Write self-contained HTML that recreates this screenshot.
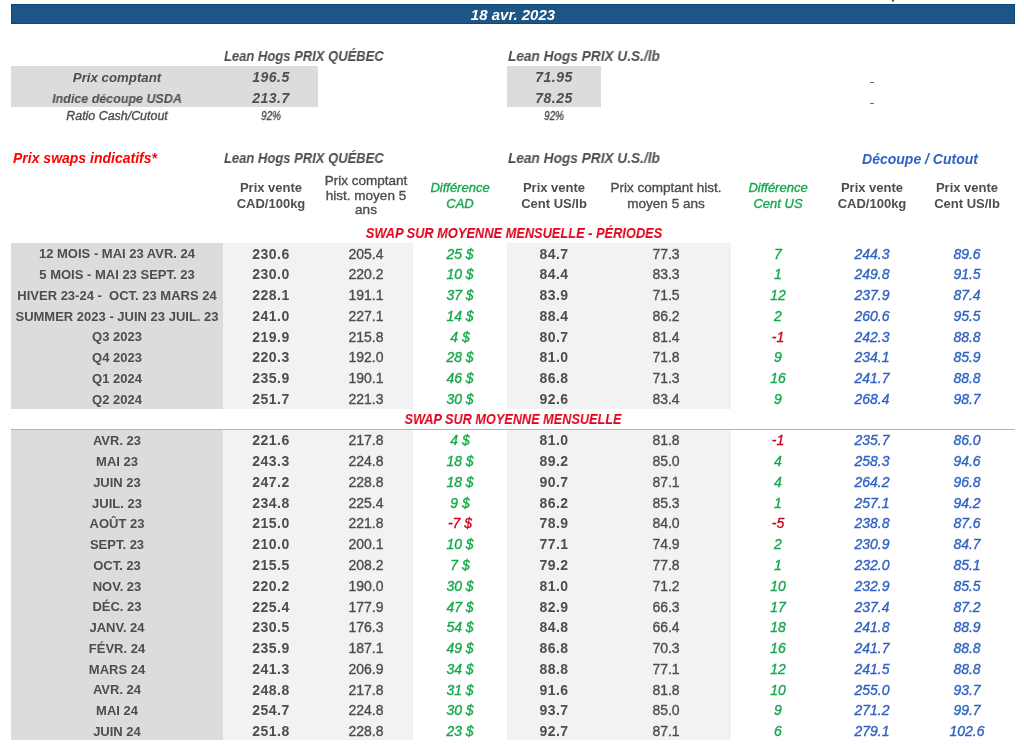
<!DOCTYPE html>
<html><head><meta charset="utf-8"><style>
html,body{margin:0;padding:0;background:#fff;width:1024px;height:744px;overflow:hidden;position:relative;font-family:"Liberation Sans", sans-serif;-webkit-font-smoothing:antialiased;}
body>div{will-change:transform;}
</style></head><body>
<div style="position:absolute;left:11px;top:4px;width:1004px;height:20px;background:#1b5687;box-sizing:border-box;border:1px solid #0d487c"></div>
<div style="position:absolute;left:313.00px;top:6.80px;width:400px;text-align:center;font-size:15px;line-height:15px;font-weight:bold;font-style:italic;color:#fff;white-space:nowrap;">18 avr. 2023</div>
<div style="position:absolute;left:891.8px;top:-1px;width:1.8px;height:3px;background:#4a4a4a;transform:skewX(-18deg);border-radius:0 0 1px 1px"></div>
<div style="position:absolute;left:224.00px;top:49.15px;width:400px;text-align:left;font-size:14px;line-height:14px;font-weight:bold;font-style:italic;color:#4d4d4d;white-space:nowrap;transform:scaleX(0.929);transform-origin:0 0;">Lean Hogs PRIX QUÉBEC</div>
<div style="position:absolute;left:508.00px;top:49.15px;width:400px;text-align:left;font-size:14px;line-height:14px;font-weight:bold;font-style:italic;color:#4d4d4d;white-space:nowrap;transform:scaleX(0.976);transform-origin:0 0;">Lean Hogs PRIX U.S./lb</div>
<div style="position:absolute;left:11px;top:66.00px;width:307px;height:41.00px;background:#dcdcdc"></div>
<div style="position:absolute;left:507px;top:66.00px;width:94px;height:41.00px;background:#dcdcdc"></div>
<div style="position:absolute;left:-83.00px;top:71.00px;width:400px;text-align:center;font-size:13px;line-height:13px;font-weight:bold;font-style:italic;color:#4d4d4d;white-space:nowrap;transform:scaleX(1.02);transform-origin:50% 0;">Prix comptant</div>
<div style="position:absolute;left:-83.00px;top:91.50px;width:400px;text-align:center;font-size:13px;line-height:13px;font-weight:bold;font-style:italic;color:#4d4d4d;white-space:nowrap;transform:scaleX(0.96);transform-origin:50% 0;">Indice découpe USDA</div>
<div style="position:absolute;left:70.50px;top:70.15px;width:400px;text-align:center;font-size:14px;line-height:14px;font-weight:bold;font-style:italic;color:#4d4d4d;white-space:nowrap;letter-spacing:0.5px;">196.5</div>
<div style="position:absolute;left:70.50px;top:90.65px;width:400px;text-align:center;font-size:14px;line-height:14px;font-weight:bold;font-style:italic;color:#4d4d4d;white-space:nowrap;letter-spacing:0.5px;">213.7</div>
<div style="position:absolute;left:354.00px;top:70.15px;width:400px;text-align:center;font-size:14px;line-height:14px;font-weight:bold;font-style:italic;color:#4d4d4d;white-space:nowrap;letter-spacing:0.5px;">71.95</div>
<div style="position:absolute;left:354.00px;top:90.65px;width:400px;text-align:center;font-size:14px;line-height:14px;font-weight:bold;font-style:italic;color:#4d4d4d;white-space:nowrap;letter-spacing:0.5px;">78.25</div>
<div style="position:absolute;left:-83.00px;top:110.34px;width:400px;text-align:center;font-size:12px;line-height:12px;font-weight:normal;font-style:italic;color:#4d4d4d;white-space:nowrap;-webkit-text-stroke:0.35px #4d4d4d;transform:scaleX(1.035);transform-origin:50% 0;">Ratio Cash/Cutout</div>
<div style="position:absolute;left:70.50px;top:109.84px;width:400px;text-align:center;font-size:12px;line-height:12px;font-weight:normal;font-style:italic;color:#4d4d4d;white-space:nowrap;-webkit-text-stroke:0.35px #4d4d4d;transform:scaleX(0.83);transform-origin:50% 0;">92%</div>
<div style="position:absolute;left:354.00px;top:109.84px;width:400px;text-align:center;font-size:12px;line-height:12px;font-weight:normal;font-style:italic;color:#4d4d4d;white-space:nowrap;-webkit-text-stroke:0.35px #4d4d4d;transform:scaleX(0.83);transform-origin:50% 0;">92%</div>
<div style="position:absolute;left:672.00px;top:75.69px;width:400px;text-align:center;font-size:11px;line-height:11px;font-weight:normal;font-style:normal;color:#4d4d4d;white-space:nowrap;-webkit-text-stroke:0.35px #4d4d4d;">-</div>
<div style="position:absolute;left:672.00px;top:96.69px;width:400px;text-align:center;font-size:11px;line-height:11px;font-weight:normal;font-style:normal;color:#4d4d4d;white-space:nowrap;-webkit-text-stroke:0.35px #4d4d4d;">-</div>
<div style="position:absolute;left:12.50px;top:151.15px;width:400px;text-align:left;font-size:14px;line-height:14px;font-weight:bold;font-style:italic;color:#ff0000;white-space:nowrap;">Prix swaps indicatifs*</div>
<div style="position:absolute;left:224.00px;top:151.15px;width:400px;text-align:left;font-size:14px;line-height:14px;font-weight:bold;font-style:italic;color:#4d4d4d;white-space:nowrap;transform:scaleX(0.929);transform-origin:0 0;">Lean Hogs PRIX QUÉBEC</div>
<div style="position:absolute;left:508.00px;top:151.15px;width:400px;text-align:left;font-size:14px;line-height:14px;font-weight:bold;font-style:italic;color:#4d4d4d;white-space:nowrap;transform:scaleX(0.976);transform-origin:0 0;">Lean Hogs PRIX U.S./lb</div>
<div style="position:absolute;left:719.50px;top:151.65px;width:400px;text-align:center;font-size:14px;line-height:14px;font-weight:bold;font-style:italic;color:#2f62c4;white-space:nowrap;">Découpe / Cutout</div>
<div style="position:absolute;left:70.50px;top:181.30px;width:400px;text-align:center;font-size:13px;line-height:13px;font-weight:bold;font-style:normal;color:#4d4d4d;white-space:nowrap;">Prix vente</div>
<div style="position:absolute;left:70.50px;top:196.60px;width:400px;text-align:center;font-size:13px;line-height:13px;font-weight:bold;font-style:normal;color:#4d4d4d;white-space:nowrap;">CAD/100kg</div>
<div style="position:absolute;left:165.50px;top:174.00px;width:400px;text-align:center;font-size:13px;line-height:13px;font-weight:normal;font-style:normal;color:#4d4d4d;white-space:nowrap;-webkit-text-stroke:0.35px #4d4d4d;transform:scaleX(1.04);transform-origin:50% 0;">Prix comptant</div>
<div style="position:absolute;left:165.50px;top:188.80px;width:400px;text-align:center;font-size:13px;line-height:13px;font-weight:normal;font-style:normal;color:#4d4d4d;white-space:nowrap;-webkit-text-stroke:0.35px #4d4d4d;transform:scaleX(1.04);transform-origin:50% 0;">hist. moyen 5</div>
<div style="position:absolute;left:165.50px;top:203.00px;width:400px;text-align:center;font-size:13px;line-height:13px;font-weight:normal;font-style:normal;color:#4d4d4d;white-space:nowrap;-webkit-text-stroke:0.35px #4d4d4d;transform:scaleX(1.04);transform-origin:50% 0;">ans</div>
<div style="position:absolute;left:260.00px;top:181.30px;width:400px;text-align:center;font-size:13px;line-height:13px;font-weight:normal;font-style:italic;color:#16a84b;white-space:nowrap;-webkit-text-stroke:0.35px #16a84b;">Différence</div>
<div style="position:absolute;left:260.00px;top:196.60px;width:400px;text-align:center;font-size:13px;line-height:13px;font-weight:normal;font-style:italic;color:#16a84b;white-space:nowrap;-webkit-text-stroke:0.35px #16a84b;">CAD</div>
<div style="position:absolute;left:354.00px;top:181.30px;width:400px;text-align:center;font-size:13px;line-height:13px;font-weight:bold;font-style:normal;color:#4d4d4d;white-space:nowrap;">Prix vente</div>
<div style="position:absolute;left:354.00px;top:196.60px;width:400px;text-align:center;font-size:13px;line-height:13px;font-weight:bold;font-style:normal;color:#4d4d4d;white-space:nowrap;">Cent US/lb</div>
<div style="position:absolute;left:466.00px;top:181.30px;width:400px;text-align:center;font-size:13px;line-height:13px;font-weight:normal;font-style:normal;color:#4d4d4d;white-space:nowrap;-webkit-text-stroke:0.35px #4d4d4d;transform:scaleX(1.04);transform-origin:50% 0;">Prix comptant hist.</div>
<div style="position:absolute;left:466.00px;top:196.60px;width:400px;text-align:center;font-size:13px;line-height:13px;font-weight:normal;font-style:normal;color:#4d4d4d;white-space:nowrap;-webkit-text-stroke:0.35px #4d4d4d;transform:scaleX(1.04);transform-origin:50% 0;">moyen 5 ans</div>
<div style="position:absolute;left:578.00px;top:181.30px;width:400px;text-align:center;font-size:13px;line-height:13px;font-weight:normal;font-style:italic;color:#16a84b;white-space:nowrap;-webkit-text-stroke:0.35px #16a84b;">Différence</div>
<div style="position:absolute;left:578.00px;top:196.60px;width:400px;text-align:center;font-size:13px;line-height:13px;font-weight:normal;font-style:italic;color:#16a84b;white-space:nowrap;-webkit-text-stroke:0.35px #16a84b;">Cent US</div>
<div style="position:absolute;left:672.00px;top:181.30px;width:400px;text-align:center;font-size:13px;line-height:13px;font-weight:bold;font-style:normal;color:#4d4d4d;white-space:nowrap;">Prix vente</div>
<div style="position:absolute;left:672.00px;top:196.60px;width:400px;text-align:center;font-size:13px;line-height:13px;font-weight:bold;font-style:normal;color:#4d4d4d;white-space:nowrap;">CAD/100kg</div>
<div style="position:absolute;left:767.00px;top:181.30px;width:400px;text-align:center;font-size:13px;line-height:13px;font-weight:bold;font-style:normal;color:#4d4d4d;white-space:nowrap;">Prix vente</div>
<div style="position:absolute;left:767.00px;top:196.60px;width:400px;text-align:center;font-size:13px;line-height:13px;font-weight:bold;font-style:normal;color:#4d4d4d;white-space:nowrap;">Cent US/lb</div>
<div style="position:absolute;left:313.80px;top:224.80px;width:400px;text-align:center;font-size:15px;line-height:15px;font-weight:bold;font-style:italic;color:#e2001a;white-space:nowrap;transform:scaleX(0.854);transform-origin:50% 0;">SWAP SUR MOYENNE MENSUELLE - PÉRIODES</div>
<div style="position:absolute;left:11px;top:242.60px;width:212px;height:166.08px;background:#dcdcdc"></div>
<div style="position:absolute;left:223px;top:242.60px;width:190px;height:166.08px;background:#f2f2f2"></div>
<div style="position:absolute;left:507px;top:242.60px;width:224px;height:166.08px;background:#f2f2f2"></div>
<div style="position:absolute;left:11px;top:429.44px;width:212px;height:311.40px;background:#dcdcdc"></div>
<div style="position:absolute;left:223px;top:429.44px;width:190px;height:311.40px;background:#f2f2f2"></div>
<div style="position:absolute;left:507px;top:429.44px;width:224px;height:311.40px;background:#f2f2f2"></div>
<div style="position:absolute;left:11px;top:429.00px;width:1004px;height:1.00px;background:#b7b3b1"></div>
<div style="position:absolute;left:313.00px;top:411.48px;width:400px;text-align:center;font-size:15px;line-height:15px;font-weight:bold;font-style:italic;color:#e2001a;white-space:nowrap;transform:scaleX(0.847);transform-origin:50% 0;">SWAP SUR MOYENNE MENSUELLE</div>
<div style="position:absolute;left:-83.00px;top:247.45px;width:400px;text-align:center;font-size:13px;line-height:13px;font-weight:bold;font-style:normal;color:#4d4d4d;white-space:nowrap;">12 MOIS - MAI 23 AVR. 24</div>
<div style="position:absolute;left:70.50px;top:246.60px;width:400px;text-align:center;font-size:14px;line-height:14px;font-weight:bold;font-style:normal;color:#4d4d4d;white-space:nowrap;letter-spacing:0.5px;">230.6</div>
<div style="position:absolute;left:165.50px;top:246.60px;width:400px;text-align:center;font-size:14px;line-height:14px;font-weight:normal;font-style:normal;color:#4d4d4d;white-space:nowrap;-webkit-text-stroke:0.35px #4d4d4d;">205.4</div>
<div style="position:absolute;left:260.00px;top:246.60px;width:400px;text-align:center;font-size:14px;line-height:14px;font-weight:normal;font-style:italic;color:#16a84b;white-space:nowrap;-webkit-text-stroke:0.35px #16a84b;">25 $</div>
<div style="position:absolute;left:354.00px;top:246.60px;width:400px;text-align:center;font-size:14px;line-height:14px;font-weight:bold;font-style:normal;color:#4d4d4d;white-space:nowrap;letter-spacing:0.5px;">84.7</div>
<div style="position:absolute;left:466.00px;top:246.60px;width:400px;text-align:center;font-size:14px;line-height:14px;font-weight:normal;font-style:normal;color:#4d4d4d;white-space:nowrap;-webkit-text-stroke:0.35px #4d4d4d;">77.3</div>
<div style="position:absolute;left:578.00px;top:246.60px;width:400px;text-align:center;font-size:14px;line-height:14px;font-weight:normal;font-style:italic;color:#16a84b;white-space:nowrap;-webkit-text-stroke:0.35px #16a84b;">7</div>
<div style="position:absolute;left:672.00px;top:246.60px;width:400px;text-align:center;font-size:14px;line-height:14px;font-weight:normal;font-style:italic;color:#2f62c4;white-space:nowrap;-webkit-text-stroke:0.35px #2f62c4;">244.3</div>
<div style="position:absolute;left:767.00px;top:246.60px;width:400px;text-align:center;font-size:14px;line-height:14px;font-weight:normal;font-style:italic;color:#2f62c4;white-space:nowrap;-webkit-text-stroke:0.35px #2f62c4;">89.6</div>
<div style="position:absolute;left:-83.00px;top:268.21px;width:400px;text-align:center;font-size:13px;line-height:13px;font-weight:bold;font-style:normal;color:#4d4d4d;white-space:nowrap;">5 MOIS - MAI 23 SEPT. 23</div>
<div style="position:absolute;left:70.50px;top:267.36px;width:400px;text-align:center;font-size:14px;line-height:14px;font-weight:bold;font-style:normal;color:#4d4d4d;white-space:nowrap;letter-spacing:0.5px;">230.0</div>
<div style="position:absolute;left:165.50px;top:267.36px;width:400px;text-align:center;font-size:14px;line-height:14px;font-weight:normal;font-style:normal;color:#4d4d4d;white-space:nowrap;-webkit-text-stroke:0.35px #4d4d4d;">220.2</div>
<div style="position:absolute;left:260.00px;top:267.36px;width:400px;text-align:center;font-size:14px;line-height:14px;font-weight:normal;font-style:italic;color:#16a84b;white-space:nowrap;-webkit-text-stroke:0.35px #16a84b;">10 $</div>
<div style="position:absolute;left:354.00px;top:267.36px;width:400px;text-align:center;font-size:14px;line-height:14px;font-weight:bold;font-style:normal;color:#4d4d4d;white-space:nowrap;letter-spacing:0.5px;">84.4</div>
<div style="position:absolute;left:466.00px;top:267.36px;width:400px;text-align:center;font-size:14px;line-height:14px;font-weight:normal;font-style:normal;color:#4d4d4d;white-space:nowrap;-webkit-text-stroke:0.35px #4d4d4d;">83.3</div>
<div style="position:absolute;left:578.00px;top:267.36px;width:400px;text-align:center;font-size:14px;line-height:14px;font-weight:normal;font-style:italic;color:#16a84b;white-space:nowrap;-webkit-text-stroke:0.35px #16a84b;">1</div>
<div style="position:absolute;left:672.00px;top:267.36px;width:400px;text-align:center;font-size:14px;line-height:14px;font-weight:normal;font-style:italic;color:#2f62c4;white-space:nowrap;-webkit-text-stroke:0.35px #2f62c4;">249.8</div>
<div style="position:absolute;left:767.00px;top:267.36px;width:400px;text-align:center;font-size:14px;line-height:14px;font-weight:normal;font-style:italic;color:#2f62c4;white-space:nowrap;-webkit-text-stroke:0.35px #2f62c4;">91.5</div>
<div style="position:absolute;left:-83.00px;top:288.97px;width:400px;text-align:center;font-size:13px;line-height:13px;font-weight:bold;font-style:normal;color:#4d4d4d;white-space:nowrap;">HIVER 23-24 -&nbsp; OCT. 23 MARS 24</div>
<div style="position:absolute;left:70.50px;top:288.12px;width:400px;text-align:center;font-size:14px;line-height:14px;font-weight:bold;font-style:normal;color:#4d4d4d;white-space:nowrap;letter-spacing:0.5px;">228.1</div>
<div style="position:absolute;left:165.50px;top:288.12px;width:400px;text-align:center;font-size:14px;line-height:14px;font-weight:normal;font-style:normal;color:#4d4d4d;white-space:nowrap;-webkit-text-stroke:0.35px #4d4d4d;">191.1</div>
<div style="position:absolute;left:260.00px;top:288.12px;width:400px;text-align:center;font-size:14px;line-height:14px;font-weight:normal;font-style:italic;color:#16a84b;white-space:nowrap;-webkit-text-stroke:0.35px #16a84b;">37 $</div>
<div style="position:absolute;left:354.00px;top:288.12px;width:400px;text-align:center;font-size:14px;line-height:14px;font-weight:bold;font-style:normal;color:#4d4d4d;white-space:nowrap;letter-spacing:0.5px;">83.9</div>
<div style="position:absolute;left:466.00px;top:288.12px;width:400px;text-align:center;font-size:14px;line-height:14px;font-weight:normal;font-style:normal;color:#4d4d4d;white-space:nowrap;-webkit-text-stroke:0.35px #4d4d4d;">71.5</div>
<div style="position:absolute;left:578.00px;top:288.12px;width:400px;text-align:center;font-size:14px;line-height:14px;font-weight:normal;font-style:italic;color:#16a84b;white-space:nowrap;-webkit-text-stroke:0.35px #16a84b;">12</div>
<div style="position:absolute;left:672.00px;top:288.12px;width:400px;text-align:center;font-size:14px;line-height:14px;font-weight:normal;font-style:italic;color:#2f62c4;white-space:nowrap;-webkit-text-stroke:0.35px #2f62c4;">237.9</div>
<div style="position:absolute;left:767.00px;top:288.12px;width:400px;text-align:center;font-size:14px;line-height:14px;font-weight:normal;font-style:italic;color:#2f62c4;white-space:nowrap;-webkit-text-stroke:0.35px #2f62c4;">87.4</div>
<div style="position:absolute;left:-83.00px;top:309.73px;width:400px;text-align:center;font-size:13px;line-height:13px;font-weight:bold;font-style:normal;color:#4d4d4d;white-space:nowrap;">SUMMER 2023 - JUIN 23 JUIL. 23</div>
<div style="position:absolute;left:70.50px;top:308.88px;width:400px;text-align:center;font-size:14px;line-height:14px;font-weight:bold;font-style:normal;color:#4d4d4d;white-space:nowrap;letter-spacing:0.5px;">241.0</div>
<div style="position:absolute;left:165.50px;top:308.88px;width:400px;text-align:center;font-size:14px;line-height:14px;font-weight:normal;font-style:normal;color:#4d4d4d;white-space:nowrap;-webkit-text-stroke:0.35px #4d4d4d;">227.1</div>
<div style="position:absolute;left:260.00px;top:308.88px;width:400px;text-align:center;font-size:14px;line-height:14px;font-weight:normal;font-style:italic;color:#16a84b;white-space:nowrap;-webkit-text-stroke:0.35px #16a84b;">14 $</div>
<div style="position:absolute;left:354.00px;top:308.88px;width:400px;text-align:center;font-size:14px;line-height:14px;font-weight:bold;font-style:normal;color:#4d4d4d;white-space:nowrap;letter-spacing:0.5px;">88.4</div>
<div style="position:absolute;left:466.00px;top:308.88px;width:400px;text-align:center;font-size:14px;line-height:14px;font-weight:normal;font-style:normal;color:#4d4d4d;white-space:nowrap;-webkit-text-stroke:0.35px #4d4d4d;">86.2</div>
<div style="position:absolute;left:578.00px;top:308.88px;width:400px;text-align:center;font-size:14px;line-height:14px;font-weight:normal;font-style:italic;color:#16a84b;white-space:nowrap;-webkit-text-stroke:0.35px #16a84b;">2</div>
<div style="position:absolute;left:672.00px;top:308.88px;width:400px;text-align:center;font-size:14px;line-height:14px;font-weight:normal;font-style:italic;color:#2f62c4;white-space:nowrap;-webkit-text-stroke:0.35px #2f62c4;">260.6</div>
<div style="position:absolute;left:767.00px;top:308.88px;width:400px;text-align:center;font-size:14px;line-height:14px;font-weight:normal;font-style:italic;color:#2f62c4;white-space:nowrap;-webkit-text-stroke:0.35px #2f62c4;">95.5</div>
<div style="position:absolute;left:-83.00px;top:330.49px;width:400px;text-align:center;font-size:13px;line-height:13px;font-weight:bold;font-style:normal;color:#4d4d4d;white-space:nowrap;">Q3 2023</div>
<div style="position:absolute;left:70.50px;top:329.64px;width:400px;text-align:center;font-size:14px;line-height:14px;font-weight:bold;font-style:normal;color:#4d4d4d;white-space:nowrap;letter-spacing:0.5px;">219.9</div>
<div style="position:absolute;left:165.50px;top:329.64px;width:400px;text-align:center;font-size:14px;line-height:14px;font-weight:normal;font-style:normal;color:#4d4d4d;white-space:nowrap;-webkit-text-stroke:0.35px #4d4d4d;">215.8</div>
<div style="position:absolute;left:260.00px;top:329.64px;width:400px;text-align:center;font-size:14px;line-height:14px;font-weight:normal;font-style:italic;color:#16a84b;white-space:nowrap;-webkit-text-stroke:0.35px #16a84b;">4 $</div>
<div style="position:absolute;left:354.00px;top:329.64px;width:400px;text-align:center;font-size:14px;line-height:14px;font-weight:bold;font-style:normal;color:#4d4d4d;white-space:nowrap;letter-spacing:0.5px;">80.7</div>
<div style="position:absolute;left:466.00px;top:329.64px;width:400px;text-align:center;font-size:14px;line-height:14px;font-weight:normal;font-style:normal;color:#4d4d4d;white-space:nowrap;-webkit-text-stroke:0.35px #4d4d4d;">81.4</div>
<div style="position:absolute;left:578.00px;top:329.64px;width:400px;text-align:center;font-size:14px;line-height:14px;font-weight:normal;font-style:italic;color:#d0021b;white-space:nowrap;-webkit-text-stroke:0.35px #d0021b;">-1</div>
<div style="position:absolute;left:672.00px;top:329.64px;width:400px;text-align:center;font-size:14px;line-height:14px;font-weight:normal;font-style:italic;color:#2f62c4;white-space:nowrap;-webkit-text-stroke:0.35px #2f62c4;">242.3</div>
<div style="position:absolute;left:767.00px;top:329.64px;width:400px;text-align:center;font-size:14px;line-height:14px;font-weight:normal;font-style:italic;color:#2f62c4;white-space:nowrap;-webkit-text-stroke:0.35px #2f62c4;">88.8</div>
<div style="position:absolute;left:-83.00px;top:351.25px;width:400px;text-align:center;font-size:13px;line-height:13px;font-weight:bold;font-style:normal;color:#4d4d4d;white-space:nowrap;">Q4 2023</div>
<div style="position:absolute;left:70.50px;top:350.40px;width:400px;text-align:center;font-size:14px;line-height:14px;font-weight:bold;font-style:normal;color:#4d4d4d;white-space:nowrap;letter-spacing:0.5px;">220.3</div>
<div style="position:absolute;left:165.50px;top:350.40px;width:400px;text-align:center;font-size:14px;line-height:14px;font-weight:normal;font-style:normal;color:#4d4d4d;white-space:nowrap;-webkit-text-stroke:0.35px #4d4d4d;">192.0</div>
<div style="position:absolute;left:260.00px;top:350.40px;width:400px;text-align:center;font-size:14px;line-height:14px;font-weight:normal;font-style:italic;color:#16a84b;white-space:nowrap;-webkit-text-stroke:0.35px #16a84b;">28 $</div>
<div style="position:absolute;left:354.00px;top:350.40px;width:400px;text-align:center;font-size:14px;line-height:14px;font-weight:bold;font-style:normal;color:#4d4d4d;white-space:nowrap;letter-spacing:0.5px;">81.0</div>
<div style="position:absolute;left:466.00px;top:350.40px;width:400px;text-align:center;font-size:14px;line-height:14px;font-weight:normal;font-style:normal;color:#4d4d4d;white-space:nowrap;-webkit-text-stroke:0.35px #4d4d4d;">71.8</div>
<div style="position:absolute;left:578.00px;top:350.40px;width:400px;text-align:center;font-size:14px;line-height:14px;font-weight:normal;font-style:italic;color:#16a84b;white-space:nowrap;-webkit-text-stroke:0.35px #16a84b;">9</div>
<div style="position:absolute;left:672.00px;top:350.40px;width:400px;text-align:center;font-size:14px;line-height:14px;font-weight:normal;font-style:italic;color:#2f62c4;white-space:nowrap;-webkit-text-stroke:0.35px #2f62c4;">234.1</div>
<div style="position:absolute;left:767.00px;top:350.40px;width:400px;text-align:center;font-size:14px;line-height:14px;font-weight:normal;font-style:italic;color:#2f62c4;white-space:nowrap;-webkit-text-stroke:0.35px #2f62c4;">85.9</div>
<div style="position:absolute;left:-83.00px;top:372.01px;width:400px;text-align:center;font-size:13px;line-height:13px;font-weight:bold;font-style:normal;color:#4d4d4d;white-space:nowrap;">Q1 2024</div>
<div style="position:absolute;left:70.50px;top:371.16px;width:400px;text-align:center;font-size:14px;line-height:14px;font-weight:bold;font-style:normal;color:#4d4d4d;white-space:nowrap;letter-spacing:0.5px;">235.9</div>
<div style="position:absolute;left:165.50px;top:371.16px;width:400px;text-align:center;font-size:14px;line-height:14px;font-weight:normal;font-style:normal;color:#4d4d4d;white-space:nowrap;-webkit-text-stroke:0.35px #4d4d4d;">190.1</div>
<div style="position:absolute;left:260.00px;top:371.16px;width:400px;text-align:center;font-size:14px;line-height:14px;font-weight:normal;font-style:italic;color:#16a84b;white-space:nowrap;-webkit-text-stroke:0.35px #16a84b;">46 $</div>
<div style="position:absolute;left:354.00px;top:371.16px;width:400px;text-align:center;font-size:14px;line-height:14px;font-weight:bold;font-style:normal;color:#4d4d4d;white-space:nowrap;letter-spacing:0.5px;">86.8</div>
<div style="position:absolute;left:466.00px;top:371.16px;width:400px;text-align:center;font-size:14px;line-height:14px;font-weight:normal;font-style:normal;color:#4d4d4d;white-space:nowrap;-webkit-text-stroke:0.35px #4d4d4d;">71.3</div>
<div style="position:absolute;left:578.00px;top:371.16px;width:400px;text-align:center;font-size:14px;line-height:14px;font-weight:normal;font-style:italic;color:#16a84b;white-space:nowrap;-webkit-text-stroke:0.35px #16a84b;">16</div>
<div style="position:absolute;left:672.00px;top:371.16px;width:400px;text-align:center;font-size:14px;line-height:14px;font-weight:normal;font-style:italic;color:#2f62c4;white-space:nowrap;-webkit-text-stroke:0.35px #2f62c4;">241.7</div>
<div style="position:absolute;left:767.00px;top:371.16px;width:400px;text-align:center;font-size:14px;line-height:14px;font-weight:normal;font-style:italic;color:#2f62c4;white-space:nowrap;-webkit-text-stroke:0.35px #2f62c4;">88.8</div>
<div style="position:absolute;left:-83.00px;top:392.77px;width:400px;text-align:center;font-size:13px;line-height:13px;font-weight:bold;font-style:normal;color:#4d4d4d;white-space:nowrap;">Q2 2024</div>
<div style="position:absolute;left:70.50px;top:391.92px;width:400px;text-align:center;font-size:14px;line-height:14px;font-weight:bold;font-style:normal;color:#4d4d4d;white-space:nowrap;letter-spacing:0.5px;">251.7</div>
<div style="position:absolute;left:165.50px;top:391.92px;width:400px;text-align:center;font-size:14px;line-height:14px;font-weight:normal;font-style:normal;color:#4d4d4d;white-space:nowrap;-webkit-text-stroke:0.35px #4d4d4d;">221.3</div>
<div style="position:absolute;left:260.00px;top:391.92px;width:400px;text-align:center;font-size:14px;line-height:14px;font-weight:normal;font-style:italic;color:#16a84b;white-space:nowrap;-webkit-text-stroke:0.35px #16a84b;">30 $</div>
<div style="position:absolute;left:354.00px;top:391.92px;width:400px;text-align:center;font-size:14px;line-height:14px;font-weight:bold;font-style:normal;color:#4d4d4d;white-space:nowrap;letter-spacing:0.5px;">92.6</div>
<div style="position:absolute;left:466.00px;top:391.92px;width:400px;text-align:center;font-size:14px;line-height:14px;font-weight:normal;font-style:normal;color:#4d4d4d;white-space:nowrap;-webkit-text-stroke:0.35px #4d4d4d;">83.4</div>
<div style="position:absolute;left:578.00px;top:391.92px;width:400px;text-align:center;font-size:14px;line-height:14px;font-weight:normal;font-style:italic;color:#16a84b;white-space:nowrap;-webkit-text-stroke:0.35px #16a84b;">9</div>
<div style="position:absolute;left:672.00px;top:391.92px;width:400px;text-align:center;font-size:14px;line-height:14px;font-weight:normal;font-style:italic;color:#2f62c4;white-space:nowrap;-webkit-text-stroke:0.35px #2f62c4;">268.4</div>
<div style="position:absolute;left:767.00px;top:391.92px;width:400px;text-align:center;font-size:14px;line-height:14px;font-weight:normal;font-style:italic;color:#2f62c4;white-space:nowrap;-webkit-text-stroke:0.35px #2f62c4;">98.7</div>
<div style="position:absolute;left:-83.00px;top:434.29px;width:400px;text-align:center;font-size:13px;line-height:13px;font-weight:bold;font-style:normal;color:#4d4d4d;white-space:nowrap;">AVR. 23</div>
<div style="position:absolute;left:70.50px;top:433.44px;width:400px;text-align:center;font-size:14px;line-height:14px;font-weight:bold;font-style:normal;color:#4d4d4d;white-space:nowrap;letter-spacing:0.5px;">221.6</div>
<div style="position:absolute;left:165.50px;top:433.44px;width:400px;text-align:center;font-size:14px;line-height:14px;font-weight:normal;font-style:normal;color:#4d4d4d;white-space:nowrap;-webkit-text-stroke:0.35px #4d4d4d;">217.8</div>
<div style="position:absolute;left:260.00px;top:433.44px;width:400px;text-align:center;font-size:14px;line-height:14px;font-weight:normal;font-style:italic;color:#16a84b;white-space:nowrap;-webkit-text-stroke:0.35px #16a84b;">4 $</div>
<div style="position:absolute;left:354.00px;top:433.44px;width:400px;text-align:center;font-size:14px;line-height:14px;font-weight:bold;font-style:normal;color:#4d4d4d;white-space:nowrap;letter-spacing:0.5px;">81.0</div>
<div style="position:absolute;left:466.00px;top:433.44px;width:400px;text-align:center;font-size:14px;line-height:14px;font-weight:normal;font-style:normal;color:#4d4d4d;white-space:nowrap;-webkit-text-stroke:0.35px #4d4d4d;">81.8</div>
<div style="position:absolute;left:578.00px;top:433.44px;width:400px;text-align:center;font-size:14px;line-height:14px;font-weight:normal;font-style:italic;color:#d0021b;white-space:nowrap;-webkit-text-stroke:0.35px #d0021b;">-1</div>
<div style="position:absolute;left:672.00px;top:433.44px;width:400px;text-align:center;font-size:14px;line-height:14px;font-weight:normal;font-style:italic;color:#2f62c4;white-space:nowrap;-webkit-text-stroke:0.35px #2f62c4;">235.7</div>
<div style="position:absolute;left:767.00px;top:433.44px;width:400px;text-align:center;font-size:14px;line-height:14px;font-weight:normal;font-style:italic;color:#2f62c4;white-space:nowrap;-webkit-text-stroke:0.35px #2f62c4;">86.0</div>
<div style="position:absolute;left:-83.00px;top:455.05px;width:400px;text-align:center;font-size:13px;line-height:13px;font-weight:bold;font-style:normal;color:#4d4d4d;white-space:nowrap;">MAI 23</div>
<div style="position:absolute;left:70.50px;top:454.20px;width:400px;text-align:center;font-size:14px;line-height:14px;font-weight:bold;font-style:normal;color:#4d4d4d;white-space:nowrap;letter-spacing:0.5px;">243.3</div>
<div style="position:absolute;left:165.50px;top:454.20px;width:400px;text-align:center;font-size:14px;line-height:14px;font-weight:normal;font-style:normal;color:#4d4d4d;white-space:nowrap;-webkit-text-stroke:0.35px #4d4d4d;">224.8</div>
<div style="position:absolute;left:260.00px;top:454.20px;width:400px;text-align:center;font-size:14px;line-height:14px;font-weight:normal;font-style:italic;color:#16a84b;white-space:nowrap;-webkit-text-stroke:0.35px #16a84b;">18 $</div>
<div style="position:absolute;left:354.00px;top:454.20px;width:400px;text-align:center;font-size:14px;line-height:14px;font-weight:bold;font-style:normal;color:#4d4d4d;white-space:nowrap;letter-spacing:0.5px;">89.2</div>
<div style="position:absolute;left:466.00px;top:454.20px;width:400px;text-align:center;font-size:14px;line-height:14px;font-weight:normal;font-style:normal;color:#4d4d4d;white-space:nowrap;-webkit-text-stroke:0.35px #4d4d4d;">85.0</div>
<div style="position:absolute;left:578.00px;top:454.20px;width:400px;text-align:center;font-size:14px;line-height:14px;font-weight:normal;font-style:italic;color:#16a84b;white-space:nowrap;-webkit-text-stroke:0.35px #16a84b;">4</div>
<div style="position:absolute;left:672.00px;top:454.20px;width:400px;text-align:center;font-size:14px;line-height:14px;font-weight:normal;font-style:italic;color:#2f62c4;white-space:nowrap;-webkit-text-stroke:0.35px #2f62c4;">258.3</div>
<div style="position:absolute;left:767.00px;top:454.20px;width:400px;text-align:center;font-size:14px;line-height:14px;font-weight:normal;font-style:italic;color:#2f62c4;white-space:nowrap;-webkit-text-stroke:0.35px #2f62c4;">94.6</div>
<div style="position:absolute;left:-83.00px;top:475.81px;width:400px;text-align:center;font-size:13px;line-height:13px;font-weight:bold;font-style:normal;color:#4d4d4d;white-space:nowrap;">JUIN 23</div>
<div style="position:absolute;left:70.50px;top:474.96px;width:400px;text-align:center;font-size:14px;line-height:14px;font-weight:bold;font-style:normal;color:#4d4d4d;white-space:nowrap;letter-spacing:0.5px;">247.2</div>
<div style="position:absolute;left:165.50px;top:474.96px;width:400px;text-align:center;font-size:14px;line-height:14px;font-weight:normal;font-style:normal;color:#4d4d4d;white-space:nowrap;-webkit-text-stroke:0.35px #4d4d4d;">228.8</div>
<div style="position:absolute;left:260.00px;top:474.96px;width:400px;text-align:center;font-size:14px;line-height:14px;font-weight:normal;font-style:italic;color:#16a84b;white-space:nowrap;-webkit-text-stroke:0.35px #16a84b;">18 $</div>
<div style="position:absolute;left:354.00px;top:474.96px;width:400px;text-align:center;font-size:14px;line-height:14px;font-weight:bold;font-style:normal;color:#4d4d4d;white-space:nowrap;letter-spacing:0.5px;">90.7</div>
<div style="position:absolute;left:466.00px;top:474.96px;width:400px;text-align:center;font-size:14px;line-height:14px;font-weight:normal;font-style:normal;color:#4d4d4d;white-space:nowrap;-webkit-text-stroke:0.35px #4d4d4d;">87.1</div>
<div style="position:absolute;left:578.00px;top:474.96px;width:400px;text-align:center;font-size:14px;line-height:14px;font-weight:normal;font-style:italic;color:#16a84b;white-space:nowrap;-webkit-text-stroke:0.35px #16a84b;">4</div>
<div style="position:absolute;left:672.00px;top:474.96px;width:400px;text-align:center;font-size:14px;line-height:14px;font-weight:normal;font-style:italic;color:#2f62c4;white-space:nowrap;-webkit-text-stroke:0.35px #2f62c4;">264.2</div>
<div style="position:absolute;left:767.00px;top:474.96px;width:400px;text-align:center;font-size:14px;line-height:14px;font-weight:normal;font-style:italic;color:#2f62c4;white-space:nowrap;-webkit-text-stroke:0.35px #2f62c4;">96.8</div>
<div style="position:absolute;left:-83.00px;top:496.57px;width:400px;text-align:center;font-size:13px;line-height:13px;font-weight:bold;font-style:normal;color:#4d4d4d;white-space:nowrap;">JUIL. 23</div>
<div style="position:absolute;left:70.50px;top:495.72px;width:400px;text-align:center;font-size:14px;line-height:14px;font-weight:bold;font-style:normal;color:#4d4d4d;white-space:nowrap;letter-spacing:0.5px;">234.8</div>
<div style="position:absolute;left:165.50px;top:495.72px;width:400px;text-align:center;font-size:14px;line-height:14px;font-weight:normal;font-style:normal;color:#4d4d4d;white-space:nowrap;-webkit-text-stroke:0.35px #4d4d4d;">225.4</div>
<div style="position:absolute;left:260.00px;top:495.72px;width:400px;text-align:center;font-size:14px;line-height:14px;font-weight:normal;font-style:italic;color:#16a84b;white-space:nowrap;-webkit-text-stroke:0.35px #16a84b;">9 $</div>
<div style="position:absolute;left:354.00px;top:495.72px;width:400px;text-align:center;font-size:14px;line-height:14px;font-weight:bold;font-style:normal;color:#4d4d4d;white-space:nowrap;letter-spacing:0.5px;">86.2</div>
<div style="position:absolute;left:466.00px;top:495.72px;width:400px;text-align:center;font-size:14px;line-height:14px;font-weight:normal;font-style:normal;color:#4d4d4d;white-space:nowrap;-webkit-text-stroke:0.35px #4d4d4d;">85.3</div>
<div style="position:absolute;left:578.00px;top:495.72px;width:400px;text-align:center;font-size:14px;line-height:14px;font-weight:normal;font-style:italic;color:#16a84b;white-space:nowrap;-webkit-text-stroke:0.35px #16a84b;">1</div>
<div style="position:absolute;left:672.00px;top:495.72px;width:400px;text-align:center;font-size:14px;line-height:14px;font-weight:normal;font-style:italic;color:#2f62c4;white-space:nowrap;-webkit-text-stroke:0.35px #2f62c4;">257.1</div>
<div style="position:absolute;left:767.00px;top:495.72px;width:400px;text-align:center;font-size:14px;line-height:14px;font-weight:normal;font-style:italic;color:#2f62c4;white-space:nowrap;-webkit-text-stroke:0.35px #2f62c4;">94.2</div>
<div style="position:absolute;left:-83.00px;top:517.33px;width:400px;text-align:center;font-size:13px;line-height:13px;font-weight:bold;font-style:normal;color:#4d4d4d;white-space:nowrap;">AOÛT 23</div>
<div style="position:absolute;left:70.50px;top:516.48px;width:400px;text-align:center;font-size:14px;line-height:14px;font-weight:bold;font-style:normal;color:#4d4d4d;white-space:nowrap;letter-spacing:0.5px;">215.0</div>
<div style="position:absolute;left:165.50px;top:516.48px;width:400px;text-align:center;font-size:14px;line-height:14px;font-weight:normal;font-style:normal;color:#4d4d4d;white-space:nowrap;-webkit-text-stroke:0.35px #4d4d4d;">221.8</div>
<div style="position:absolute;left:260.00px;top:516.48px;width:400px;text-align:center;font-size:14px;line-height:14px;font-weight:normal;font-style:italic;color:#d0021b;white-space:nowrap;-webkit-text-stroke:0.35px #d0021b;">-7 $</div>
<div style="position:absolute;left:354.00px;top:516.48px;width:400px;text-align:center;font-size:14px;line-height:14px;font-weight:bold;font-style:normal;color:#4d4d4d;white-space:nowrap;letter-spacing:0.5px;">78.9</div>
<div style="position:absolute;left:466.00px;top:516.48px;width:400px;text-align:center;font-size:14px;line-height:14px;font-weight:normal;font-style:normal;color:#4d4d4d;white-space:nowrap;-webkit-text-stroke:0.35px #4d4d4d;">84.0</div>
<div style="position:absolute;left:578.00px;top:516.48px;width:400px;text-align:center;font-size:14px;line-height:14px;font-weight:normal;font-style:italic;color:#d0021b;white-space:nowrap;-webkit-text-stroke:0.35px #d0021b;">-5</div>
<div style="position:absolute;left:672.00px;top:516.48px;width:400px;text-align:center;font-size:14px;line-height:14px;font-weight:normal;font-style:italic;color:#2f62c4;white-space:nowrap;-webkit-text-stroke:0.35px #2f62c4;">238.8</div>
<div style="position:absolute;left:767.00px;top:516.48px;width:400px;text-align:center;font-size:14px;line-height:14px;font-weight:normal;font-style:italic;color:#2f62c4;white-space:nowrap;-webkit-text-stroke:0.35px #2f62c4;">87.6</div>
<div style="position:absolute;left:-83.00px;top:538.09px;width:400px;text-align:center;font-size:13px;line-height:13px;font-weight:bold;font-style:normal;color:#4d4d4d;white-space:nowrap;">SEPT. 23</div>
<div style="position:absolute;left:70.50px;top:537.24px;width:400px;text-align:center;font-size:14px;line-height:14px;font-weight:bold;font-style:normal;color:#4d4d4d;white-space:nowrap;letter-spacing:0.5px;">210.0</div>
<div style="position:absolute;left:165.50px;top:537.24px;width:400px;text-align:center;font-size:14px;line-height:14px;font-weight:normal;font-style:normal;color:#4d4d4d;white-space:nowrap;-webkit-text-stroke:0.35px #4d4d4d;">200.1</div>
<div style="position:absolute;left:260.00px;top:537.24px;width:400px;text-align:center;font-size:14px;line-height:14px;font-weight:normal;font-style:italic;color:#16a84b;white-space:nowrap;-webkit-text-stroke:0.35px #16a84b;">10 $</div>
<div style="position:absolute;left:354.00px;top:537.24px;width:400px;text-align:center;font-size:14px;line-height:14px;font-weight:bold;font-style:normal;color:#4d4d4d;white-space:nowrap;letter-spacing:0.5px;">77.1</div>
<div style="position:absolute;left:466.00px;top:537.24px;width:400px;text-align:center;font-size:14px;line-height:14px;font-weight:normal;font-style:normal;color:#4d4d4d;white-space:nowrap;-webkit-text-stroke:0.35px #4d4d4d;">74.9</div>
<div style="position:absolute;left:578.00px;top:537.24px;width:400px;text-align:center;font-size:14px;line-height:14px;font-weight:normal;font-style:italic;color:#16a84b;white-space:nowrap;-webkit-text-stroke:0.35px #16a84b;">2</div>
<div style="position:absolute;left:672.00px;top:537.24px;width:400px;text-align:center;font-size:14px;line-height:14px;font-weight:normal;font-style:italic;color:#2f62c4;white-space:nowrap;-webkit-text-stroke:0.35px #2f62c4;">230.9</div>
<div style="position:absolute;left:767.00px;top:537.24px;width:400px;text-align:center;font-size:14px;line-height:14px;font-weight:normal;font-style:italic;color:#2f62c4;white-space:nowrap;-webkit-text-stroke:0.35px #2f62c4;">84.7</div>
<div style="position:absolute;left:-83.00px;top:558.85px;width:400px;text-align:center;font-size:13px;line-height:13px;font-weight:bold;font-style:normal;color:#4d4d4d;white-space:nowrap;">OCT. 23</div>
<div style="position:absolute;left:70.50px;top:558.00px;width:400px;text-align:center;font-size:14px;line-height:14px;font-weight:bold;font-style:normal;color:#4d4d4d;white-space:nowrap;letter-spacing:0.5px;">215.5</div>
<div style="position:absolute;left:165.50px;top:558.00px;width:400px;text-align:center;font-size:14px;line-height:14px;font-weight:normal;font-style:normal;color:#4d4d4d;white-space:nowrap;-webkit-text-stroke:0.35px #4d4d4d;">208.2</div>
<div style="position:absolute;left:260.00px;top:558.00px;width:400px;text-align:center;font-size:14px;line-height:14px;font-weight:normal;font-style:italic;color:#16a84b;white-space:nowrap;-webkit-text-stroke:0.35px #16a84b;">7 $</div>
<div style="position:absolute;left:354.00px;top:558.00px;width:400px;text-align:center;font-size:14px;line-height:14px;font-weight:bold;font-style:normal;color:#4d4d4d;white-space:nowrap;letter-spacing:0.5px;">79.2</div>
<div style="position:absolute;left:466.00px;top:558.00px;width:400px;text-align:center;font-size:14px;line-height:14px;font-weight:normal;font-style:normal;color:#4d4d4d;white-space:nowrap;-webkit-text-stroke:0.35px #4d4d4d;">77.8</div>
<div style="position:absolute;left:578.00px;top:558.00px;width:400px;text-align:center;font-size:14px;line-height:14px;font-weight:normal;font-style:italic;color:#16a84b;white-space:nowrap;-webkit-text-stroke:0.35px #16a84b;">1</div>
<div style="position:absolute;left:672.00px;top:558.00px;width:400px;text-align:center;font-size:14px;line-height:14px;font-weight:normal;font-style:italic;color:#2f62c4;white-space:nowrap;-webkit-text-stroke:0.35px #2f62c4;">232.0</div>
<div style="position:absolute;left:767.00px;top:558.00px;width:400px;text-align:center;font-size:14px;line-height:14px;font-weight:normal;font-style:italic;color:#2f62c4;white-space:nowrap;-webkit-text-stroke:0.35px #2f62c4;">85.1</div>
<div style="position:absolute;left:-83.00px;top:579.61px;width:400px;text-align:center;font-size:13px;line-height:13px;font-weight:bold;font-style:normal;color:#4d4d4d;white-space:nowrap;">NOV. 23</div>
<div style="position:absolute;left:70.50px;top:578.76px;width:400px;text-align:center;font-size:14px;line-height:14px;font-weight:bold;font-style:normal;color:#4d4d4d;white-space:nowrap;letter-spacing:0.5px;">220.2</div>
<div style="position:absolute;left:165.50px;top:578.76px;width:400px;text-align:center;font-size:14px;line-height:14px;font-weight:normal;font-style:normal;color:#4d4d4d;white-space:nowrap;-webkit-text-stroke:0.35px #4d4d4d;">190.0</div>
<div style="position:absolute;left:260.00px;top:578.76px;width:400px;text-align:center;font-size:14px;line-height:14px;font-weight:normal;font-style:italic;color:#16a84b;white-space:nowrap;-webkit-text-stroke:0.35px #16a84b;">30 $</div>
<div style="position:absolute;left:354.00px;top:578.76px;width:400px;text-align:center;font-size:14px;line-height:14px;font-weight:bold;font-style:normal;color:#4d4d4d;white-space:nowrap;letter-spacing:0.5px;">81.0</div>
<div style="position:absolute;left:466.00px;top:578.76px;width:400px;text-align:center;font-size:14px;line-height:14px;font-weight:normal;font-style:normal;color:#4d4d4d;white-space:nowrap;-webkit-text-stroke:0.35px #4d4d4d;">71.2</div>
<div style="position:absolute;left:578.00px;top:578.76px;width:400px;text-align:center;font-size:14px;line-height:14px;font-weight:normal;font-style:italic;color:#16a84b;white-space:nowrap;-webkit-text-stroke:0.35px #16a84b;">10</div>
<div style="position:absolute;left:672.00px;top:578.76px;width:400px;text-align:center;font-size:14px;line-height:14px;font-weight:normal;font-style:italic;color:#2f62c4;white-space:nowrap;-webkit-text-stroke:0.35px #2f62c4;">232.9</div>
<div style="position:absolute;left:767.00px;top:578.76px;width:400px;text-align:center;font-size:14px;line-height:14px;font-weight:normal;font-style:italic;color:#2f62c4;white-space:nowrap;-webkit-text-stroke:0.35px #2f62c4;">85.5</div>
<div style="position:absolute;left:-83.00px;top:600.37px;width:400px;text-align:center;font-size:13px;line-height:13px;font-weight:bold;font-style:normal;color:#4d4d4d;white-space:nowrap;">DÉC. 23</div>
<div style="position:absolute;left:70.50px;top:599.52px;width:400px;text-align:center;font-size:14px;line-height:14px;font-weight:bold;font-style:normal;color:#4d4d4d;white-space:nowrap;letter-spacing:0.5px;">225.4</div>
<div style="position:absolute;left:165.50px;top:599.52px;width:400px;text-align:center;font-size:14px;line-height:14px;font-weight:normal;font-style:normal;color:#4d4d4d;white-space:nowrap;-webkit-text-stroke:0.35px #4d4d4d;">177.9</div>
<div style="position:absolute;left:260.00px;top:599.52px;width:400px;text-align:center;font-size:14px;line-height:14px;font-weight:normal;font-style:italic;color:#16a84b;white-space:nowrap;-webkit-text-stroke:0.35px #16a84b;">47 $</div>
<div style="position:absolute;left:354.00px;top:599.52px;width:400px;text-align:center;font-size:14px;line-height:14px;font-weight:bold;font-style:normal;color:#4d4d4d;white-space:nowrap;letter-spacing:0.5px;">82.9</div>
<div style="position:absolute;left:466.00px;top:599.52px;width:400px;text-align:center;font-size:14px;line-height:14px;font-weight:normal;font-style:normal;color:#4d4d4d;white-space:nowrap;-webkit-text-stroke:0.35px #4d4d4d;">66.3</div>
<div style="position:absolute;left:578.00px;top:599.52px;width:400px;text-align:center;font-size:14px;line-height:14px;font-weight:normal;font-style:italic;color:#16a84b;white-space:nowrap;-webkit-text-stroke:0.35px #16a84b;">17</div>
<div style="position:absolute;left:672.00px;top:599.52px;width:400px;text-align:center;font-size:14px;line-height:14px;font-weight:normal;font-style:italic;color:#2f62c4;white-space:nowrap;-webkit-text-stroke:0.35px #2f62c4;">237.4</div>
<div style="position:absolute;left:767.00px;top:599.52px;width:400px;text-align:center;font-size:14px;line-height:14px;font-weight:normal;font-style:italic;color:#2f62c4;white-space:nowrap;-webkit-text-stroke:0.35px #2f62c4;">87.2</div>
<div style="position:absolute;left:-83.00px;top:621.13px;width:400px;text-align:center;font-size:13px;line-height:13px;font-weight:bold;font-style:normal;color:#4d4d4d;white-space:nowrap;">JANV. 24</div>
<div style="position:absolute;left:70.50px;top:620.28px;width:400px;text-align:center;font-size:14px;line-height:14px;font-weight:bold;font-style:normal;color:#4d4d4d;white-space:nowrap;letter-spacing:0.5px;">230.5</div>
<div style="position:absolute;left:165.50px;top:620.28px;width:400px;text-align:center;font-size:14px;line-height:14px;font-weight:normal;font-style:normal;color:#4d4d4d;white-space:nowrap;-webkit-text-stroke:0.35px #4d4d4d;">176.3</div>
<div style="position:absolute;left:260.00px;top:620.28px;width:400px;text-align:center;font-size:14px;line-height:14px;font-weight:normal;font-style:italic;color:#16a84b;white-space:nowrap;-webkit-text-stroke:0.35px #16a84b;">54 $</div>
<div style="position:absolute;left:354.00px;top:620.28px;width:400px;text-align:center;font-size:14px;line-height:14px;font-weight:bold;font-style:normal;color:#4d4d4d;white-space:nowrap;letter-spacing:0.5px;">84.8</div>
<div style="position:absolute;left:466.00px;top:620.28px;width:400px;text-align:center;font-size:14px;line-height:14px;font-weight:normal;font-style:normal;color:#4d4d4d;white-space:nowrap;-webkit-text-stroke:0.35px #4d4d4d;">66.4</div>
<div style="position:absolute;left:578.00px;top:620.28px;width:400px;text-align:center;font-size:14px;line-height:14px;font-weight:normal;font-style:italic;color:#16a84b;white-space:nowrap;-webkit-text-stroke:0.35px #16a84b;">18</div>
<div style="position:absolute;left:672.00px;top:620.28px;width:400px;text-align:center;font-size:14px;line-height:14px;font-weight:normal;font-style:italic;color:#2f62c4;white-space:nowrap;-webkit-text-stroke:0.35px #2f62c4;">241.8</div>
<div style="position:absolute;left:767.00px;top:620.28px;width:400px;text-align:center;font-size:14px;line-height:14px;font-weight:normal;font-style:italic;color:#2f62c4;white-space:nowrap;-webkit-text-stroke:0.35px #2f62c4;">88.9</div>
<div style="position:absolute;left:-83.00px;top:641.89px;width:400px;text-align:center;font-size:13px;line-height:13px;font-weight:bold;font-style:normal;color:#4d4d4d;white-space:nowrap;">FÉVR. 24</div>
<div style="position:absolute;left:70.50px;top:641.04px;width:400px;text-align:center;font-size:14px;line-height:14px;font-weight:bold;font-style:normal;color:#4d4d4d;white-space:nowrap;letter-spacing:0.5px;">235.9</div>
<div style="position:absolute;left:165.50px;top:641.04px;width:400px;text-align:center;font-size:14px;line-height:14px;font-weight:normal;font-style:normal;color:#4d4d4d;white-space:nowrap;-webkit-text-stroke:0.35px #4d4d4d;">187.1</div>
<div style="position:absolute;left:260.00px;top:641.04px;width:400px;text-align:center;font-size:14px;line-height:14px;font-weight:normal;font-style:italic;color:#16a84b;white-space:nowrap;-webkit-text-stroke:0.35px #16a84b;">49 $</div>
<div style="position:absolute;left:354.00px;top:641.04px;width:400px;text-align:center;font-size:14px;line-height:14px;font-weight:bold;font-style:normal;color:#4d4d4d;white-space:nowrap;letter-spacing:0.5px;">86.8</div>
<div style="position:absolute;left:466.00px;top:641.04px;width:400px;text-align:center;font-size:14px;line-height:14px;font-weight:normal;font-style:normal;color:#4d4d4d;white-space:nowrap;-webkit-text-stroke:0.35px #4d4d4d;">70.3</div>
<div style="position:absolute;left:578.00px;top:641.04px;width:400px;text-align:center;font-size:14px;line-height:14px;font-weight:normal;font-style:italic;color:#16a84b;white-space:nowrap;-webkit-text-stroke:0.35px #16a84b;">16</div>
<div style="position:absolute;left:672.00px;top:641.04px;width:400px;text-align:center;font-size:14px;line-height:14px;font-weight:normal;font-style:italic;color:#2f62c4;white-space:nowrap;-webkit-text-stroke:0.35px #2f62c4;">241.7</div>
<div style="position:absolute;left:767.00px;top:641.04px;width:400px;text-align:center;font-size:14px;line-height:14px;font-weight:normal;font-style:italic;color:#2f62c4;white-space:nowrap;-webkit-text-stroke:0.35px #2f62c4;">88.8</div>
<div style="position:absolute;left:-83.00px;top:662.65px;width:400px;text-align:center;font-size:13px;line-height:13px;font-weight:bold;font-style:normal;color:#4d4d4d;white-space:nowrap;">MARS 24</div>
<div style="position:absolute;left:70.50px;top:661.80px;width:400px;text-align:center;font-size:14px;line-height:14px;font-weight:bold;font-style:normal;color:#4d4d4d;white-space:nowrap;letter-spacing:0.5px;">241.3</div>
<div style="position:absolute;left:165.50px;top:661.80px;width:400px;text-align:center;font-size:14px;line-height:14px;font-weight:normal;font-style:normal;color:#4d4d4d;white-space:nowrap;-webkit-text-stroke:0.35px #4d4d4d;">206.9</div>
<div style="position:absolute;left:260.00px;top:661.80px;width:400px;text-align:center;font-size:14px;line-height:14px;font-weight:normal;font-style:italic;color:#16a84b;white-space:nowrap;-webkit-text-stroke:0.35px #16a84b;">34 $</div>
<div style="position:absolute;left:354.00px;top:661.80px;width:400px;text-align:center;font-size:14px;line-height:14px;font-weight:bold;font-style:normal;color:#4d4d4d;white-space:nowrap;letter-spacing:0.5px;">88.8</div>
<div style="position:absolute;left:466.00px;top:661.80px;width:400px;text-align:center;font-size:14px;line-height:14px;font-weight:normal;font-style:normal;color:#4d4d4d;white-space:nowrap;-webkit-text-stroke:0.35px #4d4d4d;">77.1</div>
<div style="position:absolute;left:578.00px;top:661.80px;width:400px;text-align:center;font-size:14px;line-height:14px;font-weight:normal;font-style:italic;color:#16a84b;white-space:nowrap;-webkit-text-stroke:0.35px #16a84b;">12</div>
<div style="position:absolute;left:672.00px;top:661.80px;width:400px;text-align:center;font-size:14px;line-height:14px;font-weight:normal;font-style:italic;color:#2f62c4;white-space:nowrap;-webkit-text-stroke:0.35px #2f62c4;">241.5</div>
<div style="position:absolute;left:767.00px;top:661.80px;width:400px;text-align:center;font-size:14px;line-height:14px;font-weight:normal;font-style:italic;color:#2f62c4;white-space:nowrap;-webkit-text-stroke:0.35px #2f62c4;">88.8</div>
<div style="position:absolute;left:-83.00px;top:683.41px;width:400px;text-align:center;font-size:13px;line-height:13px;font-weight:bold;font-style:normal;color:#4d4d4d;white-space:nowrap;">AVR. 24</div>
<div style="position:absolute;left:70.50px;top:682.56px;width:400px;text-align:center;font-size:14px;line-height:14px;font-weight:bold;font-style:normal;color:#4d4d4d;white-space:nowrap;letter-spacing:0.5px;">248.8</div>
<div style="position:absolute;left:165.50px;top:682.56px;width:400px;text-align:center;font-size:14px;line-height:14px;font-weight:normal;font-style:normal;color:#4d4d4d;white-space:nowrap;-webkit-text-stroke:0.35px #4d4d4d;">217.8</div>
<div style="position:absolute;left:260.00px;top:682.56px;width:400px;text-align:center;font-size:14px;line-height:14px;font-weight:normal;font-style:italic;color:#16a84b;white-space:nowrap;-webkit-text-stroke:0.35px #16a84b;">31 $</div>
<div style="position:absolute;left:354.00px;top:682.56px;width:400px;text-align:center;font-size:14px;line-height:14px;font-weight:bold;font-style:normal;color:#4d4d4d;white-space:nowrap;letter-spacing:0.5px;">91.6</div>
<div style="position:absolute;left:466.00px;top:682.56px;width:400px;text-align:center;font-size:14px;line-height:14px;font-weight:normal;font-style:normal;color:#4d4d4d;white-space:nowrap;-webkit-text-stroke:0.35px #4d4d4d;">81.8</div>
<div style="position:absolute;left:578.00px;top:682.56px;width:400px;text-align:center;font-size:14px;line-height:14px;font-weight:normal;font-style:italic;color:#16a84b;white-space:nowrap;-webkit-text-stroke:0.35px #16a84b;">10</div>
<div style="position:absolute;left:672.00px;top:682.56px;width:400px;text-align:center;font-size:14px;line-height:14px;font-weight:normal;font-style:italic;color:#2f62c4;white-space:nowrap;-webkit-text-stroke:0.35px #2f62c4;">255.0</div>
<div style="position:absolute;left:767.00px;top:682.56px;width:400px;text-align:center;font-size:14px;line-height:14px;font-weight:normal;font-style:italic;color:#2f62c4;white-space:nowrap;-webkit-text-stroke:0.35px #2f62c4;">93.7</div>
<div style="position:absolute;left:-83.00px;top:704.17px;width:400px;text-align:center;font-size:13px;line-height:13px;font-weight:bold;font-style:normal;color:#4d4d4d;white-space:nowrap;">MAI 24</div>
<div style="position:absolute;left:70.50px;top:703.32px;width:400px;text-align:center;font-size:14px;line-height:14px;font-weight:bold;font-style:normal;color:#4d4d4d;white-space:nowrap;letter-spacing:0.5px;">254.7</div>
<div style="position:absolute;left:165.50px;top:703.32px;width:400px;text-align:center;font-size:14px;line-height:14px;font-weight:normal;font-style:normal;color:#4d4d4d;white-space:nowrap;-webkit-text-stroke:0.35px #4d4d4d;">224.8</div>
<div style="position:absolute;left:260.00px;top:703.32px;width:400px;text-align:center;font-size:14px;line-height:14px;font-weight:normal;font-style:italic;color:#16a84b;white-space:nowrap;-webkit-text-stroke:0.35px #16a84b;">30 $</div>
<div style="position:absolute;left:354.00px;top:703.32px;width:400px;text-align:center;font-size:14px;line-height:14px;font-weight:bold;font-style:normal;color:#4d4d4d;white-space:nowrap;letter-spacing:0.5px;">93.7</div>
<div style="position:absolute;left:466.00px;top:703.32px;width:400px;text-align:center;font-size:14px;line-height:14px;font-weight:normal;font-style:normal;color:#4d4d4d;white-space:nowrap;-webkit-text-stroke:0.35px #4d4d4d;">85.0</div>
<div style="position:absolute;left:578.00px;top:703.32px;width:400px;text-align:center;font-size:14px;line-height:14px;font-weight:normal;font-style:italic;color:#16a84b;white-space:nowrap;-webkit-text-stroke:0.35px #16a84b;">9</div>
<div style="position:absolute;left:672.00px;top:703.32px;width:400px;text-align:center;font-size:14px;line-height:14px;font-weight:normal;font-style:italic;color:#2f62c4;white-space:nowrap;-webkit-text-stroke:0.35px #2f62c4;">271.2</div>
<div style="position:absolute;left:767.00px;top:703.32px;width:400px;text-align:center;font-size:14px;line-height:14px;font-weight:normal;font-style:italic;color:#2f62c4;white-space:nowrap;-webkit-text-stroke:0.35px #2f62c4;">99.7</div>
<div style="position:absolute;left:-83.00px;top:724.93px;width:400px;text-align:center;font-size:13px;line-height:13px;font-weight:bold;font-style:normal;color:#4d4d4d;white-space:nowrap;">JUIN 24</div>
<div style="position:absolute;left:70.50px;top:724.08px;width:400px;text-align:center;font-size:14px;line-height:14px;font-weight:bold;font-style:normal;color:#4d4d4d;white-space:nowrap;letter-spacing:0.5px;">251.8</div>
<div style="position:absolute;left:165.50px;top:724.08px;width:400px;text-align:center;font-size:14px;line-height:14px;font-weight:normal;font-style:normal;color:#4d4d4d;white-space:nowrap;-webkit-text-stroke:0.35px #4d4d4d;">228.8</div>
<div style="position:absolute;left:260.00px;top:724.08px;width:400px;text-align:center;font-size:14px;line-height:14px;font-weight:normal;font-style:italic;color:#16a84b;white-space:nowrap;-webkit-text-stroke:0.35px #16a84b;">23 $</div>
<div style="position:absolute;left:354.00px;top:724.08px;width:400px;text-align:center;font-size:14px;line-height:14px;font-weight:bold;font-style:normal;color:#4d4d4d;white-space:nowrap;letter-spacing:0.5px;">92.7</div>
<div style="position:absolute;left:466.00px;top:724.08px;width:400px;text-align:center;font-size:14px;line-height:14px;font-weight:normal;font-style:normal;color:#4d4d4d;white-space:nowrap;-webkit-text-stroke:0.35px #4d4d4d;">87.1</div>
<div style="position:absolute;left:578.00px;top:724.08px;width:400px;text-align:center;font-size:14px;line-height:14px;font-weight:normal;font-style:italic;color:#16a84b;white-space:nowrap;-webkit-text-stroke:0.35px #16a84b;">6</div>
<div style="position:absolute;left:672.00px;top:724.08px;width:400px;text-align:center;font-size:14px;line-height:14px;font-weight:normal;font-style:italic;color:#2f62c4;white-space:nowrap;-webkit-text-stroke:0.35px #2f62c4;">279.1</div>
<div style="position:absolute;left:767.00px;top:724.08px;width:400px;text-align:center;font-size:14px;line-height:14px;font-weight:normal;font-style:italic;color:#2f62c4;white-space:nowrap;-webkit-text-stroke:0.35px #2f62c4;">102.6</div>
</body></html>
